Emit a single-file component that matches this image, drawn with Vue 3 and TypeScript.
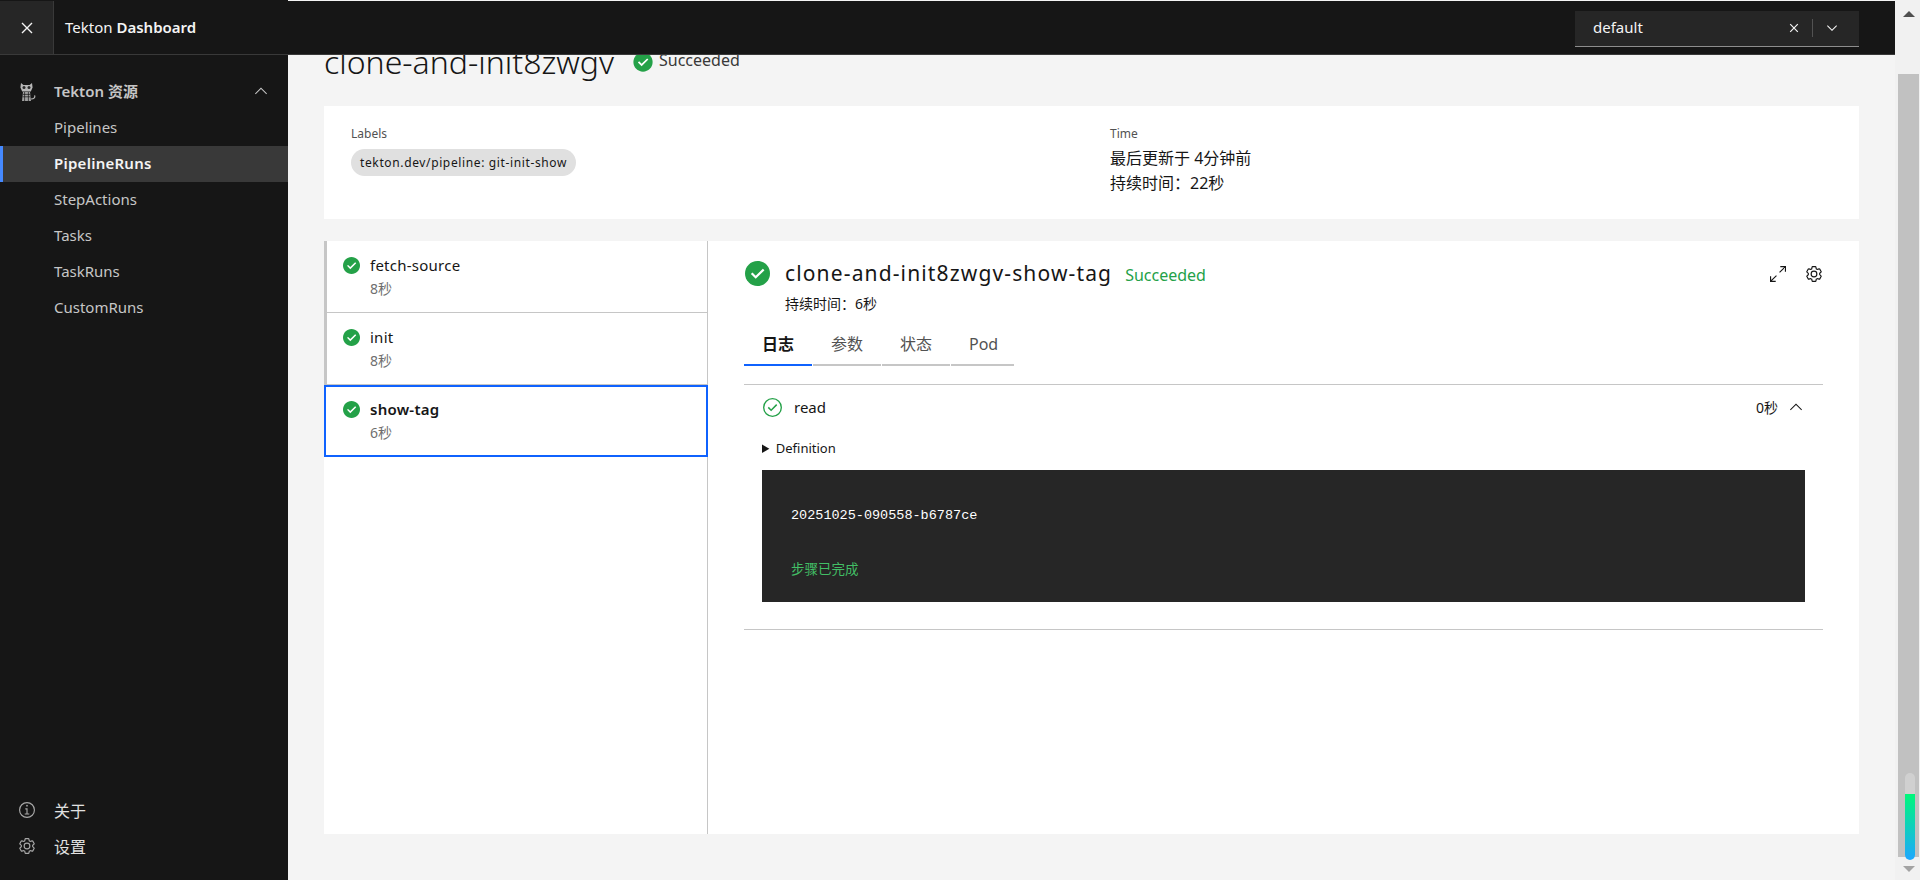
<script setup lang="ts">
import { ref } from "vue";

const navItems = ["Pipelines", "PipelineRuns", "StepActions", "Tasks", "TaskRuns", "CustomRuns"];
const activeNav = ref("PipelineRuns");

const taskRuns = [
  { name: "fetch-source", time: "8秒" },
  { name: "init", time: "8秒" },
  { name: "show-tag", time: "6秒" },
];
const activeTask = ref("show-tag");

const tabs = ["日志", "参数", "状态", "Pod"];
const activeTab = ref("日志");

// 水印:每行重复同一段文字
const watermarkRows = Array.from({ length: 9 });
const watermarkCols = Array.from({ length: 10 });

const gearOuter =
  "M27,16.76c0-.25,0-.5,0-.76s0-.51,0-.77l1.92-1.68A2,2,0,0,0,29.3,11L26.94,7a2,2,0,0,0-1.73-1,2,2,0,0,0-.64.1l-2.43.82a11.35,11.35,0,0,0-1.31-.75l-.51-2.52a2,2,0,0,0-2-1.61H13.64a2,2,0,0,0-2,1.61l-.51,2.52a11.48,11.48,0,0,0-1.32.75L7.43,6.06A2,2,0,0,0,6.79,6,2,2,0,0,0,5.06,7L2.7,11a2,2,0,0,0,.41,2.51L5,15.24c0,.25,0,.5,0,.76s0,.51,0,.77L3.11,18.45A2,2,0,0,0,2.7,21L5.06,25a2,2,0,0,0,1.73,1,2,2,0,0,0,.64-.1l2.43-.82a11.35,11.35,0,0,0,1.31.75l.51,2.52a2,2,0,0,0,2,1.61h4.72a2,2,0,0,0,2-1.61l.51-2.52a11.48,11.48,0,0,0,1.32-.75l2.43.82a2,2,0,0,0,.64.1,2,2,0,0,0,1.73-1L29.3,21a2,2,0,0,0-.41-2.51ZM25.21,24l-3.43-1.16a8.86,8.86,0,0,1-2.71,1.57L18.36,28H13.64l-.71-3.55a9.36,9.36,0,0,1-2.7-1.57L6.79,24,4.43,20l2.72-2.4a8.9,8.9,0,0,1,0-3.13L4.43,12,6.79,8l3.43,1.16a8.86,8.86,0,0,1,2.71-1.57L13.64,4h4.72l.71,3.55a9.36,9.36,0,0,1,2.7,1.57L25.21,8,27.57,12l-2.72,2.4a8.9,8.9,0,0,1,0,3.13L27.57,20Z";
const gearInner =
  "M16,22a6,6,0,1,1,6-6A5.94,5.94,0,0,1,16,22Zm0-10a3.91,3.91,0,0,0-4,4,3.91,3.91,0,0,0,4,4,3.91,3.91,0,0,0,4-4A3.91,3.91,0,0,0,16,12Z";
const checkFilled =
  "M8,1C4.1,1,1,4.1,1,8c0,3.9,3.1,7,7,7s7-3.1,7-7C15,4.1,11.9,1,8,1z";
const checkMark = "M7,11L4.3,8.3l0.9-0.8L7,9.3l4-3.9l0.9,0.8L7,11z";
const chevronUp = "M8 4.5l6 6-.7.7L8 5.9l-5.3 5.3-.7-.7z";
</script>

<template>
  <div class="page">
    <aside class="sidenav">
      <div class="nav-group">
        <svg class="cat" viewBox="0 0 18 20" width="18" height="20">
          <path d="M3 1l2.4 2h6.2L14 1l.6 4.6-1.8 4H4.2L2.4 5.6z" fill="#b8b8b8" />
          <circle cx="6" cy="5.6" r="1.5" fill="#2a2a2a" />
          <circle cx="11" cy="5.6" r="1.5" fill="#2a2a2a" />
          <path d="M5 10h7l1 9H4z" fill="#a0a0a0" />
          <path d="M4.8 12.4h7.4M4.5 14.8h8M6.6 10v9M10.4 10v9" stroke="#161616" stroke-width=".7" fill="none" />
          <path d="M13 17c3.2 0 4.4-1.6 3.6-3.6" stroke="#b8b8b8" stroke-width="1.2" fill="none" />
        </svg>
        <span class="nav-group-label">Tekton 资源</span>
        <svg class="nav-chevron" viewBox="0 0 16 16" width="16" height="16">
          <path :d="chevronUp" fill="#c6c6c6" />
        </svg>
      </div>
      <a v-for="item in navItems" :key="item" class="nav-item" :class="{ active: item === activeNav }">{{ item }}</a>

      <div class="nav-bottom">
        <a class="nav-util">
          <svg viewBox="1 1 14 14" width="16" height="16" fill="#a8a8a8">
            <path d="M8.5 11V6.5h-2v1h1V11H6v1h4v-1zM8 3.5a.75.75 0 1 0 0 1.5.75.75 0 0 0 0-1.5z" />
            <path d="M8 15A7 7 0 1 1 8 1a7 7 0 0 1 0 14zM8 2a6 6 0 1 0 0 12A6 6 0 0 0 8 2z" />
          </svg>
          <span>关于</span>
        </a>
        <a class="nav-util">
          <svg viewBox="2 2 28 28" width="16" height="16" fill="#a8a8a8">
            <path :d="gearOuter" />
            <path :d="gearInner" />
          </svg>
          <span>设置</span>
        </a>
      </div>
    </aside>

    <main class="content">
      <div class="page-head">
        <h1>clone-and-init8zwgv</h1>
        <svg viewBox="0 0 16 16" width="22" height="22" class="head-status">
          <path :d="checkFilled" fill="#24a148" />
          <path :d="checkMark" fill="#fff" />
        </svg>
        <span class="head-status-text">Succeeded</span>
      </div>

      <section class="summary">
        <div>
          <div class="summary-label">Labels</div>
          <span class="chip">tekton.dev/pipeline: git-init-show</span>
        </div>
        <div>
          <div class="summary-label">Time</div>
          <div class="summary-line first">最后更新于 4分钟前</div>
          <div class="summary-line">持续时间：22秒</div>
        </div>
      </section>

      <section class="run-panel">
        <ul class="task-list">
          <li
            v-for="task in taskRuns"
            :key="task.name"
            class="task-row"
            :class="{ selected: task.name === activeTask }"
          >
            <svg viewBox="1 1 14 14" width="17" height="17" class="task-icon">
              <path :d="checkFilled" fill="#24a148" />
              <path :d="checkMark" fill="#fff" />
            </svg>
            <div>
              <div class="task-name">{{ task.name }}</div>
              <div class="task-time">{{ task.time }}</div>
            </div>
          </li>
        </ul>

        <div class="details">
          <div class="details-head">
            <svg viewBox="1 1 14 14" width="25" height="25" class="details-status">
              <path :d="checkFilled" fill="#24a148" />
              <path :d="checkMark" fill="#fff" />
            </svg>
            <span class="details-title">clone-and-init8zwgv-show-tag</span>
            <span class="details-state">Succeeded</span>
            <div class="details-actions">
              <svg viewBox="1 1 14 14" width="16" height="16" fill="#161616">
                <path d="M10 1v1h3.3L9 6.3l.7.7L14 2.7V6h1V1zM6.3 9L2 13.3V10H1v5h5v-1H2.7L7 9.7z" />
              </svg>
              <svg viewBox="2 2 28 28" width="16" height="16" fill="#161616">
                <path :d="gearOuter" />
                <path :d="gearInner" />
              </svg>
            </div>
          </div>
          <div class="details-duration">持续时间：6秒</div>

          <div class="tabs">
            <button v-for="tab in tabs" :key="tab" class="tab" :class="{ active: tab === activeTab }">{{ tab }}</button>
          </div>

          <div class="step">
            <div class="step-head">
              <svg viewBox="1 1 14 14" width="19" height="19" fill="#24a148">
                <path d="M7 10.8L4.5 8.3l.8-.8L7 9.2l3.7-3.7.8.8z" />
                <path d="M8,1a7,7,0,1,0,7,7A7,7,0,0,0,8,1ZM8,14a6,6,0,1,1,6-6A6,6,0,0,1,8,14Z" />
              </svg>
              <span class="step-name">read</span>
              <span class="step-time">0秒</span>
              <svg viewBox="0 0 16 16" width="16" height="16">
                <path :d="chevronUp" fill="#161616" />
              </svg>
            </div>
            <details class="step-def">
              <summary>Definition</summary>
            </details>
            <pre class="log"><code class="log-line">20251025-090558-b6787ce</code><code class="log-done">步骤已完成</code></pre>
          </div>
        </div>
      </section>
    </main>

    <div class="scrollbar">
      <span class="arrow-up"></span>
      <div class="scroll-thumb"></div>
      <span class="arrow-down"></span>
      <div class="scroll-glow"><div class="scroll-glow-fill"></div></div>
    </div>

    <header class="topbar">
      <button class="menu-btn">
        <svg viewBox="0 0 20 20" width="20" height="20">
          <path d="M5 5l10 10M15 5L5 15" stroke="#f4f4f4" stroke-width="1.4" fill="none" />
        </svg>
      </button>
      <div class="brand">Tekton <b>Dashboard</b></div>
      <div class="ns-select">
        <span class="ns-value">default</span>
        <svg viewBox="0 0 16 16" width="16" height="16">
          <path d="M4.2 4.2l7.6 7.6M11.8 4.2l-7.6 7.6" stroke="#f4f4f4" stroke-width="1.2" fill="none" />
        </svg>
        <span class="ns-sep"></span>
        <svg class="ns-chevron" viewBox="0 0 16 16" width="16" height="16">
          <path d="M8 11L3 6l.7-.7L8 9.6l4.3-4.3.7.7z" fill="#f4f4f4" />
        </svg>
      </div>
    </header>

    <div class="watermark" aria-hidden="true">
      <div v-for="(_, r) in watermarkRows" :key="r" class="wm-row">
        <span v-for="(_, c) in watermarkCols" :key="c">yangwenmb_</span>
      </div>
    </div>
  </div>
</template>

<style scoped>
.page {
  position: relative;
  display: grid;
  grid-template-columns: 288px 1fr 25px;
  height: 880px;
  overflow: hidden;
  background: #f4f4f4;
  color: #161616;
  font-family: "Noto Sans", "Noto Sans CJK SC", sans-serif;
  font-size: 14px;
}

/* 顶栏盖在内容之上 */
.topbar {
  position: absolute;
  top: 1px;
  left: 0;
  right: 25px;
  height: 53px;
  display: flex;
  align-items: center;
  background: #161616;
  border-bottom: 1px solid #393939;
  color: #f4f4f4;
}

.menu-btn {
  width: 54px;
  height: 53px;
  display: flex;
  align-items: center;
  justify-content: center;
  padding: 0;
  background: #262626;
  border: 0;
  border-right: 1px solid #393939;
}

.brand {
  margin-left: 11px;
  margin-top: -1px;
  font-size: 15px;
}

.brand b {
  font-weight: 600;
}

.ns-select {
  display: flex;
  align-items: center;
  width: 284px;
  height: 36px;
  margin-left: auto;
  margin-right: 36px;
  margin-top: 2px;
  box-sizing: border-box;
  padding-left: 18px;
  background: #262626;
  border-bottom: 1px solid #8d8d8d;
}

.ns-value {
  flex: 1;
  font-size: 15px;
  margin-top: -2px;
}

.ns-sep {
  width: 1px;
  height: 18px;
  margin: 0 11px 0 10px;
  background: #525252;
}

.ns-chevron {
  margin-right: 19px;
}

.sidenav {
  display: flex;
  flex-direction: column;
  padding-top: 74px;
  box-sizing: border-box;
  height: 880px;
  background: #161616;
  color: #c6c6c6;
}

.nav-group {
  display: flex;
  align-items: center;
  height: 36px;
  padding-left: 18px;
}

.nav-group-label {
  margin-left: 18px;
  margin-top: -4px;
  font-size: 15px;
  font-weight: 600;
  color: #c6c6c6;
}

.nav-chevron {
  margin-left: auto;
  margin-right: 19px;
  margin-top: -2px;
}

.nav-item {
  display: flex;
  align-items: center;
  height: 36px;
  box-sizing: border-box;
  padding-left: 54px;
  padding-bottom: 2px;
  font-size: 15px;
}

.nav-item.active {
  padding-left: 51px;
  border-left: 3px solid #4589ff;
  background: #393939;
  color: #f4f4f4;
  font-weight: 600;
  letter-spacing: 0.25px;
}

.nav-bottom {
  margin-top: auto;
  padding-bottom: 16px;
}

.nav-util {
  display: flex;
  align-items: center;
  gap: 19px;
  height: 36px;
  padding-left: 19px;
  font-size: 16px;
  color: #e0e0e0;
}

.content {
  padding: 42px 36px 0;
  min-width: 0;
}

.page-head {
  display: flex;
  align-items: center;
  height: 40px;
}

.page-head h1 {
  margin: 0;
  font-size: 32px;
  line-height: 40px;
  font-weight: 300;
}

.head-status {
  margin-left: 18px;
}

.head-status-text {
  margin-left: 5px;
  margin-top: -4px;
  font-size: 16px;
  color: #393939;
}

.summary {
  display: grid;
  grid-template-columns: 759px 1fr;
  height: 113px;
  box-sizing: border-box;
  margin-top: 24px;
  padding: 20px 27px 0;
  background: #fff;
}

.summary-label {
  font-size: 12px;
  line-height: 16px;
  color: #525252;
}

.summary-line {
  line-height: 25px;
  font-size: 16px;
}

.summary-line.first {
  margin-top: 4px;
}

.chip {
  display: inline-block;
  margin-top: 7px;
  padding: 0 9px;
  height: 27px;
  line-height: 27px;
  font-size: 12px;
  letter-spacing: 0.63px;
  border-radius: 14px;
  background: #e0e0e0;
}

.run-panel {
  display: flex;
  height: 593px;
  margin-top: 22px;
  background: #fff;
}

.task-list {
  width: 384px;
  box-sizing: border-box;
  margin: 0;
  padding: 0;
  list-style: none;
  border-right: 1px solid #c6c6c6;
}

.task-row {
  display: flex;
  height: 72px;
  box-sizing: border-box;
  padding: 15px 0 0 16px;
  border-left: 3px solid #c6c6c6;
  border-bottom: 1px solid #c6c6c6;
}

.task-row.selected {
  padding-left: 19px;
  border-left: 0;
  border-bottom: 0;
  margin-right: -1px;
  box-shadow: inset 0 0 0 2px #0f62fe;
}

.task-row.selected .task-name {
  font-weight: 600;
}

.task-icon {
  margin: 1px 10px 0 0;
}

.task-name {
  font-size: 15px;
  letter-spacing: 0.25px;
  line-height: 18px;
}

.task-time {
  margin-top: 7px;
  font-size: 14px;
  line-height: 16px;
  color: #6f6f6f;
}

.details {
  flex: 1;
  min-width: 0;
  padding: 19px 36px 0;
}

.details-head {
  display: flex;
  align-items: center;
  height: 26px;
}

.details-status {
  margin-left: 1px;
}

.details-title {
  margin-left: 15px;
  font-size: 21px;
  letter-spacing: 1.14px;
  line-height: 26px;
}

.details-state {
  margin-left: 13px;
  margin-top: 3px;
  font-size: 16px;
  color: #24a148;
}

.details-actions {
  display: flex;
  gap: 20px;
  margin-left: auto;
  margin-right: 1px;
  margin-top: 2px;
}

.details-duration {
  margin: 10px 0 0 41px;
  font-size: 14px;
  line-height: 16px;
}

.tabs {
  display: flex;
  gap: 1px;
  margin-top: 14px;
}

.tab {
  width: 68px;
  height: 40px;
  box-sizing: border-box;
  padding: 9px 0 11px 18px;
  background: none;
  border: 0;
  border-bottom: 2px solid #c6c6c6;
  color: #525252;
  font: inherit;
  font-size: 16px;
  line-height: 18px;
  text-align: left;
}

.tab:last-child {
  width: 63px;
}

.tab.active {
  border-bottom-color: #0f62fe;
  color: #161616;
  font-weight: 600;
}

.step {
  height: 246px;
  box-sizing: border-box;
  margin-top: 18px;
  border-top: 1px solid #c6c6c6;
  border-bottom: 1px solid #c6c6c6;
}

.step-head {
  display: flex;
  align-items: center;
  height: 44px;
  padding: 0 19px;
}

.step-name {
  margin-left: 12px;
  font-size: 15px;
}

.step-time {
  margin-left: auto;
  margin-right: 10px;
  font-size: 14px;
}

.step-def {
  margin: 11px 18px 0;
  font-size: 13px;
  line-height: 16px;
}

.log {
  height: 132px;
  box-sizing: border-box;
  margin: 14px 18px 0;
  padding: 37px 29px 0;
  background: #262626;
  font-family: "Liberation Mono", "Noto Sans CJK SC", monospace;
  font-size: 13.5px;
  line-height: 18px;
}

.log-line,
.log-done {
  display: block;
  font: inherit;
}

.log-line {
  color: #fff;
}

.log-done {
  margin-top: 37px;
  color: #42be65;
}

.scrollbar {
  position: relative;
  display: flex;
  flex-direction: column;
  align-items: center;
  padding: 11px 0 0 2px;
  box-sizing: border-box;
  height: 880px;
  background: #f1f1f1;
}

.arrow-up {
  border: 6px solid transparent;
  border-top: 0;
  border-bottom: 6px solid #505050;
}

.scroll-thumb {
  width: 21px;
  height: 783px;
  margin-top: 57px;
  background: #c1c1c1;
}

.arrow-down {
  margin-top: 9px;
  border: 6px solid transparent;
  border-bottom: 0;
  border-top: 6px solid #a3a3a3;
}

/* 覆盖在滚动条上的指示条 */
.scroll-glow {
  position: absolute;
  left: 10px;
  top: 773px;
  width: 10px;
  height: 87px;
  padding-top: 21px;
  box-sizing: border-box;
  border-radius: 5px;
  background: rgba(255, 255, 255, 0.25);
  overflow: hidden;
}

.scroll-glow-fill {
  height: 100%;
  background: linear-gradient(#00f77a, #1ea7ff);
}

.watermark {
  position: absolute;
  inset: 48px 0 0 70px;
  pointer-events: none;
}

.wm-row {
  display: flex;
  height: 90px;
  white-space: nowrap;
  color: rgba(0, 0, 0, 0.02);
  font-size: 27px;
  line-height: 90px;
}

.wm-row span {
  flex: 0 0 180px;
}
</style>

<style>
html,
body {
  margin: 0;
  background: #f4f4f4;
}
</style>
